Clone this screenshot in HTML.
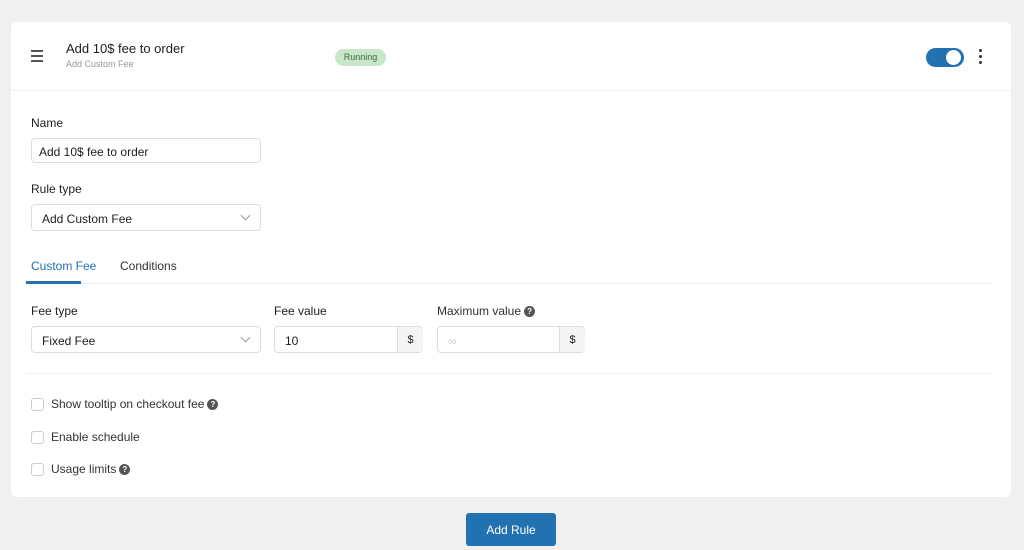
<!DOCTYPE html>
<html><head><style>
body{margin:0;width:1024px;height:550px;background:#f0f0f1;font-family:"Liberation Sans",sans-serif;position:relative;overflow:hidden;color:#1e1e1e}
.a{position:absolute}
.card{left:11px;top:22px;width:1000px;height:475px;background:#fff;border-radius:6px}
.lbl{font-size:12px;color:#1e1e1e}
.inp{border:1px solid #ddd;border-radius:4px;box-sizing:border-box;font-size:12px;background:#fff}
.cb{width:13px;height:13px;border:1px solid #ccc;border-radius:3px;box-sizing:border-box}
.q{display:inline-block;width:11px;height:11px;border-radius:50%;background:#555;color:#fff;font-size:8px;font-weight:bold;text-align:center;line-height:11px;vertical-align:1px;margin-left:3px}
.chev{width:6px;height:6px;border-right:1px solid #999;border-bottom:1px solid #999;transform:rotate(45deg)}
.dol{width:25px;height:25px;background:#f5f5f5;border-left:1px solid #ddd;font-size:11px;text-align:center;line-height:27px;border-radius:0 4px 4px 0}
</style></head><body>
<div class="a card"></div>
<div class="a" style="left:31px;top:50px;width:12px;height:2px;background:#555;box-shadow:0 5px 0 #555,0 10px 0 #555"></div>
<div class="a" style="left:66px;top:41px;font-size:13px">Add 10$ fee to order</div>
<div class="a" style="left:66px;top:59px;font-size:9px;color:#999">Add Custom Fee</div>
<div class="a" style="left:335px;top:49px;width:51px;height:17px;background:#c8e6c9;border-radius:9px;font-size:9px;color:#3c6e3c;text-align:center;line-height:17px">Running</div>
<div class="a" style="left:926px;top:48px;width:38px;height:19px;background:#2271b1;border-radius:10px"></div>
<div class="a" style="left:946px;top:50px;width:15px;height:15px;background:#fff;border-radius:50%"></div>
<div class="a" style="left:979px;top:49px;width:3px;height:3px;background:#333;border-radius:50%;box-shadow:0 6px 0 #333,0 12px 0 #333"></div>
<div class="a" style="left:11px;top:90px;width:1000px;height:1px;background:#eee"></div>
<div class="a lbl" style="left:31px;top:116px">Name</div>
<div class="a inp" style="left:31px;top:138px;width:230px;height:25px;padding:6px 7px">Add 10$ fee to order</div>
<div class="a lbl" style="left:31px;top:182px">Rule type</div>
<div class="a inp" style="left:31px;top:204px;width:230px;height:27px;padding:7px 10px">Add Custom Fee</div>
<div class="a chev" style="left:242px;top:212px"></div>
<div class="a" style="left:31px;top:259px;font-size:12px;color:#2271b1">Custom Fee</div>
<div class="a" style="left:120px;top:259px;font-size:12px;color:#333">Conditions</div>
<div class="a" style="left:31px;top:283px;width:961px;height:1px;background:#eee"></div>
<div class="a" style="left:26px;top:281px;width:55px;height:3px;background:#2271b1"></div>
<div class="a lbl" style="left:31px;top:304px">Fee type</div>
<div class="a lbl" style="left:274px;top:304px">Fee value</div>
<div class="a lbl" style="left:437px;top:304px;color:#333">Maximum value<span class="q">?</span></div>
<div class="a inp" style="left:31px;top:326px;width:230px;height:27px;padding:7px 10px">Fixed Fee</div>
<div class="a chev" style="left:242px;top:334px"></div>
<div class="a inp" style="left:274px;top:326px;width:149px;height:27px;padding:7px 10px">10</div>
<div class="a dol" style="left:397px;top:327px">$</div>
<div class="a inp" style="left:437px;top:326px;width:148px;height:27px;padding:7px 10px;color:#ccc">∞</div>
<div class="a dol" style="left:559px;top:327px">$</div>
<div class="a" style="left:26px;top:373px;width:966px;height:1px;background:#eee"></div>
<div class="a cb" style="left:31px;top:398px"></div>
<div class="a lbl" style="left:51px;top:397px;color:#333">Show tooltip on checkout fee<span class="q">?</span></div>
<div class="a cb" style="left:31px;top:431px"></div>
<div class="a lbl" style="left:51px;top:430px;color:#333">Enable schedule</div>
<div class="a cb" style="left:31px;top:463px"></div>
<div class="a lbl" style="left:51px;top:462px;color:#333">Usage limits<span class="q">?</span></div>
<div class="a" style="left:466px;top:513px;width:90px;height:33px;background:#2271b1;border-radius:3px;color:#fff;font-size:12px;text-align:center;line-height:35px">Add Rule</div>
</body></html>
